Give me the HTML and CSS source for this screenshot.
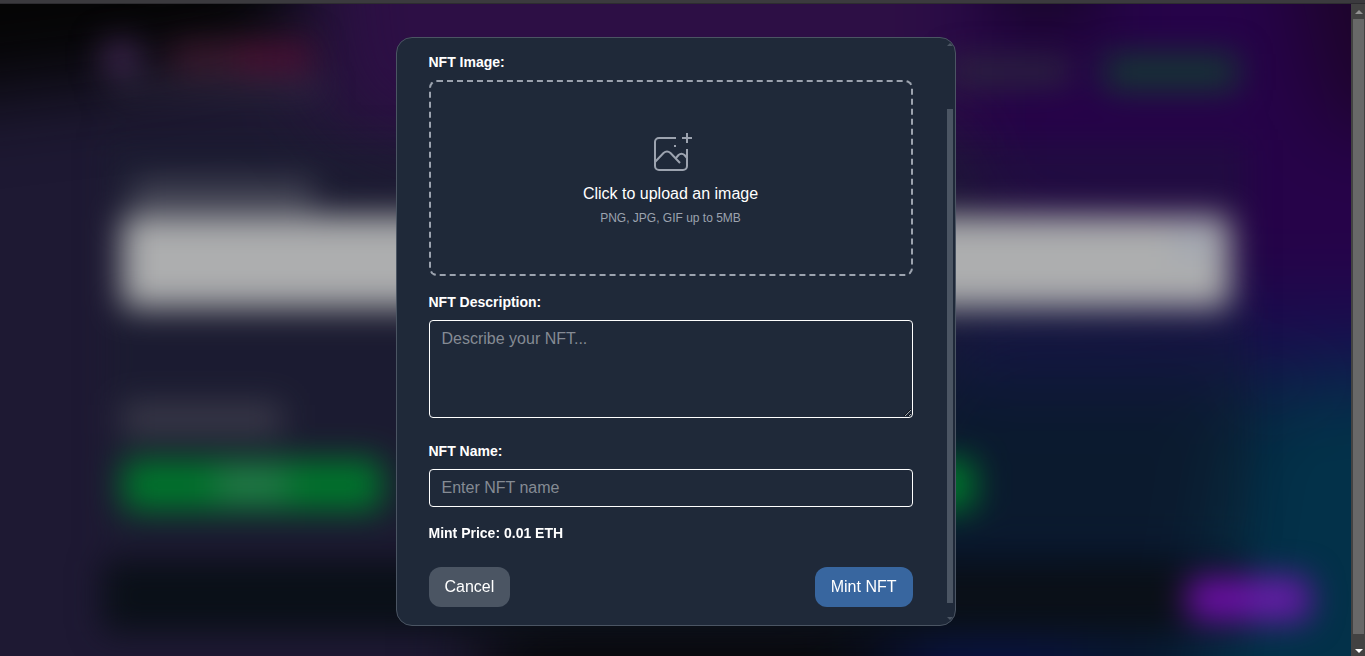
FILE: index.html
```html
<!DOCTYPE html>
<html lang="en">
<head>
<meta charset="utf-8">
<title>Mint NFT</title>
<link rel="stylesheet" href="styles.css">
</head>
<body>
<div class="top-strip"></div>
<div class="viewport">
  <main class="stage">
    <svg class="backdrop" viewBox="0 4 1351 652" preserveAspectRatio="none" aria-hidden="true">
      <defs>
        <filter id="wide" color-interpolation-filters="sRGB" filterUnits="userSpaceOnUse" x="-300" y="-300" width="1951" height="1256"><feGaussianBlur stdDeviation="40"/></filter>
        <filter id="soft" color-interpolation-filters="sRGB" filterUnits="userSpaceOnUse" x="-100" y="-100" width="1551" height="856"><feGaussianBlur stdDeviation="16"/></filter>
      </defs>
      <rect y="0" width="1351" height="660" fill="#1e1933"/>
      <g filter="url(#wide)">
        <path d="M-150-150H290V50L150 75L-150 110Z" fill="#050505"/>
        <path d="M310-150H960V130L600 200L330 120Z" fill="#2d0f45"/>
        <path d="M960-150H1500V300L1280 310L960 230Z" fill="#260349"/>
        <path d="M1270-150H1500V130H1330Z" fill="#1d042a"/>
        <path d="M1000-150H1090V30H1000Z" fill="#13081f"/>
        <path d="M900 370L1240 340V800H800Z" fill="#08172f"/>
        <path d="M940 300H1500V375H940Z" fill="#161050"/>
        <path d="M1245 390L1500 360V800H1180Z" fill="#033149"/>
        <path d="M480 600H900V760H480Z" fill="#08090c"/>
        <path d="M890 625H1080V760H890Z" fill="#09113f"/>
      </g>
      <g filter="url(#soft)">
        <rect x="106" y="140" width="1142" height="400" fill="#15242c" opacity=".25"/>
        <rect x="102" y="41" width="38" height="32" fill="#60397a" opacity=".6"/>
        <rect x="170" y="41" width="80" height="33" fill="#5b213e" opacity=".55"/>
        <rect x="240" y="41" width="72" height="34" fill="#601039" opacity=".65"/>
        <rect x="110" y="80" width="215" height="18" fill="#45415c" opacity=".35"/>
        <rect x="950" y="58" width="120" height="27" fill="#304038" opacity=".55"/>
        <rect x="1104" y="54" width="134" height="36" fill="#12402f" opacity=".85"/>
        <rect x="132" y="180" width="182" height="30" fill="#76777f" opacity=".45"/>
        <rect x="122" y="216" width="1108" height="92" rx="8" fill="#adaeaf"/>
        <rect x="1175" y="232" width="38" height="24" fill="#8c9abb" opacity=".4"/>
        <rect x="122" y="404" width="160" height="30" fill="#52515c" opacity=".6"/>
        <rect x="122" y="459" width="260" height="52" rx="8" fill="#00752c"/>
        <rect x="216" y="470" width="72" height="28" fill="#52816b" opacity=".5"/>
        <rect x="700" y="459" width="275" height="52" rx="8" fill="#00752c"/>
        <rect x="102" y="560" width="1146" height="72" rx="8" fill="#0a1018"/>
        <rect x="1187" y="577" width="123" height="44" rx="10" fill="#6a10a5"/>
        <rect x="1250" y="584" width="45" height="28" fill="#6030ac" opacity=".6"/>
      </g>
    </svg>

    <section class="modal" role="dialog" aria-label="Mint NFT">
      <form class="modal-body">
        <div class="field">
          <span class="label" id="image-label">NFT Image:</span>
          <button class="dropzone" type="button" aria-describedby="image-label">
            <svg class="drop-icon" viewBox="0 0 48 48" aria-hidden="true">
              <path d="M29 8H12a4 4 0 0 0-4 4v24a4 4 0 0 0 4 4h24a4 4 0 0 0 4-4V19"/>
              <path d="M40 3v10M35 8h10M27 16h2"/>
              <path d="M8 32l8.500-9q3.500-3 7 0l9.500 10M29 28l2.500-3q3-2.500 6 0l2.500 3"/>
            </svg>
            <span class="drop-title">Click to upload an image</span>
            <span class="drop-hint">PNG, JPG, GIF up to 5MB</span>
          </button>
        </div>
        <div class="field">
          <label class="label" for="description">NFT Description:</label>
          <textarea class="input textarea" id="description" placeholder="Describe your NFT..."></textarea>
        </div>
        <div class="field">
          <label class="label" for="name">NFT Name:</label>
          <input class="input text-input" id="name" type="text" placeholder="Enter NFT name">
        </div>
        <p class="price">Mint Price: 0.01 ETH</p>
        <div class="actions">
          <button class="btn btn-cancel" type="button">Cancel</button>
          <button class="btn btn-mint" type="button">Mint NFT</button>
        </div>
      </form>
      <div class="modal-scroll" aria-hidden="true">
        <svg class="mini-arrow" viewBox="0 0 6 3"><path d="M0 3L3 0L6 3Z"/></svg>
        <div class="modal-thumb"></div>
        <svg class="mini-arrow" viewBox="0 0 6 3"><path d="M0 0L3 3L6 0Z"/></svg>
      </div>
    </section>
  </main>
  <div class="page-scroll" aria-hidden="true">
    <svg class="arrow arrow-up" viewBox="0 0 8 4"><path d="M0 4L4 0L8 4Z"/></svg>
    <div class="page-thumb"></div>
    <svg class="arrow arrow-down" viewBox="0 0 8 4"><path d="M0 0L4 4L8 0Z"/></svg>
  </div>
</div>
</body>
</html>
```
FILE: styles.css
```css
* {
  box-sizing: border-box;
}

body {
  margin: 0;
  height: 100vh;
  display: flex;
  flex-direction: column;
  overflow: hidden;
  background: #1e1933;
  color: #fff;
  font: 16px/24px "Liberation Sans", Arial, sans-serif;
}

.top-strip {
  flex: none;
  height: 4px;
  background: #3b3a3e;
  border-bottom: 1px solid #2d2c30;
}

.viewport {
  flex: 1;
  min-height: 0;
  display: flex;
}

.stage {
  flex: 1;
  position: relative;
  display: flex;
  align-items: center;
  justify-content: center;
  padding-top: 3px;
  overflow: hidden;
}

.backdrop {
  position: absolute;
  inset: 0;
  width: 100%;
  height: 100%;
}

.modal {
  position: relative;
  display: flex;
  width: 100%;
  max-width: 560px;
  background: #1f2939;
  border: 1px solid #4b5563;
  border-radius: 16px;
  overflow: hidden;
}

.modal-body {
  flex: 1;
  padding: 14px 32px 18px;
}

.field {
  margin-bottom: 16px;
}

.label,
.price {
  display: block;
  font-size: 14px;
  line-height: 20px;
  font-weight: 700;
}

.label {
  margin-bottom: 8px;
}

.dropzone {
  display: flex;
  flex-direction: column;
  align-items: center;
  justify-content: center;
  width: 100%;
  height: 196px;
  padding: 0;
  border: 2px dashed #9ca3af;
  border-radius: 8px;
  background: transparent;
  color: #fff;
  font: inherit;
  cursor: pointer;
}

.drop-icon {
  width: 48px;
  height: 48px;
  margin-bottom: 4px;
  fill: none;
  stroke: #9ca3af;
  stroke-width: 2;
}

.drop-hint {
  margin-top: 4px;
  font-size: 12px;
  line-height: 16px;
  color: #9ca3af;
}

.input {
  width: 100%;
  padding: 6px 12px;
  border: 1px solid #fff;
  border-radius: 4px;
  background: transparent;
  color: #fff;
  font: inherit;
}

.input::placeholder {
  color: #858b94;
}

.textarea {
  height: 98px;
  resize: vertical;
}

.text-input {
  display: block;
  height: 38px;
}

.price {
  margin: 0 0 24px;
}

.actions {
  display: flex;
  justify-content: space-between;
}

.btn {
  padding: 8px 16px;
  border: 0;
  border-radius: 12px;
  color: #fff;
  font: inherit;
}

.btn-cancel {
  background: #4b5563;
}

.btn-mint {
  background: #38669f;
}

.modal-scroll {
  display: flex;
  flex-direction: column;
  align-items: center;
  width: 10px;
  padding: 5px 0;
}

.mini-arrow {
  flex: none;
  width: 6px;
  height: 3px;
  fill: #4b5563;
}

.modal-thumb {
  flex: 1;
  width: 6px;
  margin: 63px 0 14px;
  background: #4b5563;
}

.page-scroll {
  flex: none;
  display: flex;
  flex-direction: column;
  align-items: center;
  width: 14px;
  padding: 6px 1px 3px 2px;
  background: #424242;
}

.arrow {
  flex: none;
  width: 8px;
  height: 4px;
}

.arrow-up {
  fill: #929292;
}

.arrow-down {
  fill: #fff;
}

.page-thumb {
  flex: 1;
  width: 100%;
  margin: 5px 0 15px;
  background: #686868;
}
```
